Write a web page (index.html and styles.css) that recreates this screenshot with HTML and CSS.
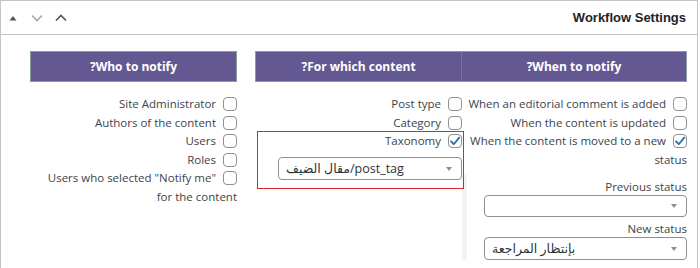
FILE: index.html
```html
<!DOCTYPE html>
<html lang="en">
<head>
<meta charset="utf-8">
<title>Workflow Settings</title>
<link rel="stylesheet" href="styles.css">
</head>
<body>
<div class="panel">
  <div class="panel-header">
    <div class="handles">
      <svg class="ic-tri" width="8" height="6" viewBox="0 0 8 6"><polygon points="0.5,5.5 4,1 7.5,5.5"/></svg>
      <svg class="ic-chev dim" width="12" height="8" viewBox="0 0 12 8"><polyline points="1,1.5 6,6.5 11,1.5"/></svg>
      <svg class="ic-chev" width="12" height="8" viewBox="0 0 12 8"><polyline points="1,6.5 6,1.5 11,6.5"/></svg>
    </div>
    <h2 class="panel-title">Workflow Settings</h2>
  </div>
  <div class="panel-body">
    <div class="group group-who">
      <div class="bar"><span class="bar-cell">?Who to notify</span></div>
      <div class="col">
        <label class="opt"><span class="cb"></span>Site Administrator</label>
        <label class="opt"><span class="cb"></span>Authors of the content</label>
        <label class="opt"><span class="cb"></span>Users</label>
        <label class="opt"><span class="cb"></span>Roles</label>
        <label class="opt"><span class="cb"></span>Users who selected "Notify me" for the content</label>
      </div>
    </div>
    <div class="group group-content">
      <div class="bar bar-split"><span class="bar-cell first">?For which content</span><span class="bar-cell">?When to notify</span></div>
      <div class="col col-content">
        <label class="opt"><span class="cb"></span>Post type</label>
        <label class="opt"><span class="cb"></span>Category</label>
        <div class="highlight">
          <label class="opt"><span class="cb checked"><svg width="14" height="14" viewBox="0 0 14 14"><polyline points="3,7.3 5.8,10.2 11.2,3.6"/></svg></span>Taxonomy</label>
          <div class="select-row">
            <div class="select"><span class="select-text">مقال الضيف/post_tag</span><span class="arrow"></span></div>
          </div>
        </div>
      </div>
      <div class="col col-when">
        <label class="opt"><span class="cb"></span>When an editorial comment is added</label>
        <label class="opt"><span class="cb"></span>When the content is updated</label>
        <label class="opt"><span class="cb checked"><svg width="14" height="14" viewBox="0 0 14 14"><polyline points="3,7.3 5.8,10.2 11.2,3.6"/></svg></span>When the content is moved to a new status</label>
        <div class="status-box">
          <div class="field-label">Previous status</div>
          <div class="select small"><span class="select-text"></span><span class="arrow"></span></div>
          <div class="field-label spaced">New status</div>
          <div class="select small"><span class="select-text">بإنتظار المراجعة</span><span class="arrow"></span></div>
        </div>
      </div>
    </div>
  </div>
</div>
</body>
</html>
```
FILE: styles.css
```css
* { box-sizing: border-box; }
body {
  margin: 0;
  background: #ffffff;
  font-family: "Open Sans", "DejaVu Sans", sans-serif;
  font-size: 11.5px;
  color: #3c434a;
}
.panel {
  width: 698px;
  border: 1px solid #c3c4c7;
  border-bottom: none;
  background: #fff;
  padding-bottom: 30px;
}
.panel-header {
  height: 34px;
  border-bottom: 1px solid #c3c4c7;
  display: flex;
  align-items: center;
  justify-content: space-between;
  padding: 0 11px 0 8px;
}
.handles {
  display: flex;
  align-items: center;
}
.ic-tri { fill: #50575e; margin-right: 14px; }
.ic-chev { fill: none; stroke: #50575e; stroke-width: 1.7; margin-right: 12px; }
.ic-chev.dim { stroke: #a7aaad; }
.panel-title {
  margin: 0;
  font-family: "Liberation Sans", Arial, sans-serif;
  font-weight: bold;
  font-size: 13px;
  color: #1d2327;
}
.panel-body {
  display: flex;
  gap: 18px;
  padding: 16px 10px 0 29px;
}
.group-who { width: 207px; }
.group-content {
  width: 432px;
  display: grid;
  grid-template-columns: 207px 225px;
}
.bar {
  height: 31px;
  background: #645893;
  border: 1px solid #8b9ba0;
  display: flex;
  color: #ffffff;
  font-weight: bold;
  font-size: 12px;
}
.bar-split { grid-column: 1 / 3; }
.bar-cell {
  flex: 1;
  display: flex;
  align-items: center;
  justify-content: center;
}
.bar-split .bar-cell.first {
  flex: 0 0 206px;
  border-right: 1px solid #6b7f80;
}
.col { padding-top: 13px; }
.opt {
  display: block;
  direction: rtl;
  text-align: right;
  line-height: 18.6px;
}
.cb {
  display: inline-block;
  width: 14px;
  height: 14px;
  border: 1px solid #8c8f94;
  border-radius: 4px;
  background: #fff;
  margin-left: 7px;
  vertical-align: -3px;
}
.cb svg {
  display: block;
  margin: -1px;
  fill: none;
  stroke: #2271b1;
  stroke-width: 1.8;
  stroke-linecap: round;
  stroke-linejoin: round;
}
.highlight {
  position: relative;
  z-index: 2;
  margin: -1.2px -2px 0 2px;
  padding: 0.2px 1px 8px 0;
  border: 1px solid #e0262b;
}
.select-row {
  display: flex;
  margin-top: 6.5px;
}
.select {
  flex: 1;
  margin-left: 20px;
  height: 23px;
  border: 1px solid #8c8f94;
  border-radius: 4px;
  background: #fff;
  display: flex;
  align-items: center;
  justify-content: space-between;
  padding: 0 9px 0 7px;
  direction: ltr;
  font-size: 12.5px;
  color: #2c3338;
}
.arrow {
  width: 0;
  height: 0;
  border-left: 3.5px solid transparent;
  border-right: 3.5px solid transparent;
  border-top: 4px solid #8c8f94;
}
.status-box {
  margin-top: 5.6px;
  border-left: 5px solid #f3f3f3;
  padding-top: 4px;
}
.field-label {
  text-align: right;
  line-height: 16px;
}
.field-label.spaced { margin-top: 4px; }
.select.small {
  margin-left: 17px;
  height: 22.5px;
}
```
